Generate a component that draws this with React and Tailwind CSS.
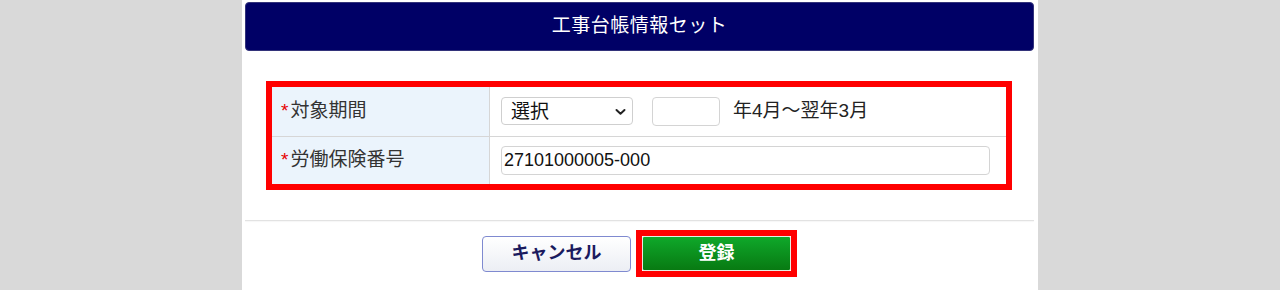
import { useState } from "react";

const font = "font-['Liberation_Sans','Noto_Sans_CJK_JP',sans-serif]";

const Chevron = () => (
  <svg className="absolute right-[7px] top-1/2 -translate-y-1/2 pointer-events-none" width="11" height="7" viewBox="0 0 11 7">
    <path d="M1.5 1.5 L5.5 5.2 L9.5 1.5" fill="none" stroke="#222" strokeWidth="2" strokeLinecap="round" strokeLinejoin="round" />
  </svg>
);

const Label = ({ children }) => (
  <div className="w-[218px] shrink-0 bg-[#ebf4fc] border-r border-[#d6d6d6] flex items-center pl-[9px] text-[19px] text-[#333]">
    <span className="text-[#e60000] mr-[2px]">*</span>
    {children}
  </div>
);

export default function App() {
  const [period, setPeriod] = useState("");
  const [year, setYear] = useState("");
  const [insNo, setInsNo] = useState("27101000005-000");

  return (
    <div className={`bg-[#d9d9d9] h-[290px] flex justify-center ${font}`}>
      <div className="w-[796px] bg-white pl-[3px] pr-[4px] pt-[2px]">
        {/* Header */}
        <div className="h-[49px] rounded-[4px] bg-[#000066] border border-[#33337a] text-white flex items-center justify-center text-[19px] tracking-[0.5px]">
          工事台帳情報セット
        </div>

        {/* Form */}
        <div className="pt-[30px] pl-[21px] pr-[22px]">
          <div className="border-[6px] border-[#ff0000]">
            <div className="flex h-[50px] border-b border-[#d6d6d6]">
              <Label>対象期間</Label>
              <div className="flex items-center pl-[11px] text-[19px] text-[#222]">
                <div className="relative">
                  <select
                    value={period}
                    onChange={(e) => setPeriod(e.target.value)}
                    className="appearance-none w-[132px] h-[28px] rounded-[4px] border border-[#cfcfcf] bg-white pl-[9px] text-[19px] text-[#111] outline-none"
                  >
                    <option value="">選択</option>
                    <option value="2023">2023</option>
                    <option value="2024">2024</option>
                  </select>
                  <Chevron />
                </div>
                <input
                  value={year}
                  onChange={(e) => setYear(e.target.value)}
                  className="ml-[19px] w-[68px] h-[29px] rounded-[4px] border border-[#d4d4d4] bg-white px-2 outline-none"
                />
                <span className="ml-[13px]">年4月～翌年3月</span>
              </div>
            </div>
            <div className="flex h-[47px]">
              <Label>労働保険番号</Label>
              <div className="flex items-center pl-[11px]">
                <input
                  value={insNo}
                  onChange={(e) => setInsNo(e.target.value)}
                  className="w-[489px] h-[29px] rounded-[4px] border border-[#d4d4d4] bg-white pl-[2px] text-[18px] text-[#111] outline-none"
                />
              </div>
            </div>
          </div>
        </div>

        <div className="mt-[30px] border-t border-[#e2e2e2] shadow-[0_1px_1px_rgba(0,0,0,0.04)]" />

        {/* Buttons */}
        <div className="mt-[9px] flex justify-center items-center gap-[5px]">
          <button className="w-[149px] h-[36px] rounded-[4px] border border-[#7f8ad0] bg-gradient-to-b from-white to-[#eceef4] text-[#1a1a5e] font-bold text-[18px]">
            キャンセル
          </button>
          <div className="border-[6px] border-[#ff0000]">
            <button className="w-[149px] h-[35px] rounded-[2px] border border-[#e4eee4] bg-gradient-to-b from-[#0fa82a] to-[#087a12] text-white font-bold text-[18px]">
              登録
            </button>
          </div>
        </div>
      </div>
    </div>
  );
}
